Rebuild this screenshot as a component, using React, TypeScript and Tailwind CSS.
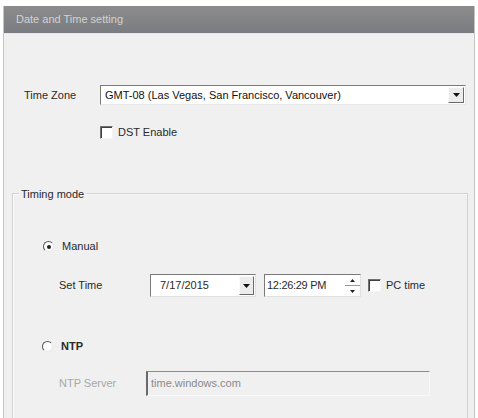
const font = { fontFamily: '"Liberation Sans", Arial, sans-serif' };

const Check = () => (
  <span className="block w-[13px] h-[13px] bg-white border border-t-[#707070] border-l-[#707070] border-b-[#f4f4f4] border-r-[#f4f4f4] shadow-[inset_1px_1px_0_#404040]" />
);

const Radio = ({ on }: { on?: boolean }) => (
  <span className="flex items-center justify-center w-[11px] h-[11px] rounded-full bg-white border border-t-[#555] border-l-[#555] border-b-[#e8e8e8] border-r-[#e8e8e8]">
    {on && <span className="block w-[4px] h-[4px] rounded-full bg-[#222]" />}
  </span>
);

const Arrow = () => (
  <svg width="7" height="4" viewBox="0 0 7 4">
    <path d="M0 0h7L3.5 4z" fill="#111" />
  </svg>
);

export default function App() {
  return (
    <div className="w-[478px] h-[418px] bg-white pt-[6px] overflow-hidden text-[11px] text-[#2a2a2a]" style={font}>
      <div className="mx-[3px] h-full border-l border-r border-[#c4c4c4] bg-[#f0f0f0]">
        <div className="h-[28px] flex items-center pl-[12px] bg-gradient-to-b from-[#8c8c8c] to-[#7a7c81] text-[#d2d2d2] border-b border-[#e8e8e8]">
          Date and Time setting
        </div>

        <div className="flex items-center mt-[51px] h-[20px]">
          <span className="w-[96px] pl-[20px]">Time Zone</span>
          <div className="w-[366px] h-[20px] flex items-center bg-white border border-t-[#7a7a7a] border-l-[#7a7a7a] border-b-[#e6e6e6] border-r-[#e6e6e6]">
            <span className="flex-1 pl-[4px] text-[#111]">GMT-08 (Las Vegas, San Francisco, Vancouver)</span>
            <span className="w-[16px] h-[16px] mr-[1px] flex items-center justify-center bg-[#ececec] border border-t-[#fafafa] border-l-[#fafafa] border-b-[#6a6a6a] border-r-[#6a6a6a]">
              <Arrow />
            </span>
          </div>
        </div>

        <div className="flex items-center gap-[5px] mt-[21px] ml-[96px] h-[13px]">
          <Check />
          <span>DST Enable</span>
        </div>

        <div className="relative mt-[54px] ml-[8px] mr-[6px] h-[240px] border border-[#d2d2d2] shadow-[inset_1px_1px_0_#fafafa] pt-[47px]">
          <span className="absolute left-[6px] -top-[8px] px-[2px] bg-[#f0f0f0]">Timing mode</span>

          <div className="flex items-center gap-[8px] ml-[30px] h-[11px]">
            <Radio on />
            <span>Manual</span>
          </div>

          <div className="flex items-center mt-[22px] ml-[46px] h-[23px]">
            <span className="w-[91px]">Set Time</span>
            <div className="w-[106px] h-[23px] flex items-center bg-white border border-t-[#7a7a7a] border-l-[#7a7a7a] border-b-[#e0e0e0] border-r-[#e0e0e0]">
              <span className="flex-1 pl-[9px]">7/17/2015</span>
              <span className="w-[15px] h-[19px] mr-[1px] flex items-center justify-center bg-[#ececec] border border-t-[#fafafa] border-l-[#fafafa] border-b-[#6a6a6a] border-r-[#6a6a6a]">
                <Arrow />
              </span>
            </div>
            <div className="ml-[8px] w-[97px] h-[23px] flex items-center bg-white border border-t-[#7a7a7a] border-l-[#7a7a7a] border-b-[#e0e0e0] border-r-[#e0e0e0]">
              <span className="flex-1 pl-[2px] tracking-[-0.3px]">12:26:29 PM</span>
              <span className="w-[15px] h-[21px] flex flex-col">
                <span className="flex-1 flex items-center justify-center border-b border-[#999]">
                  <svg width="5" height="3" viewBox="0 0 5 3"><path d="M0 3h5L2.5 0z" fill="#222" /></svg>
                </span>
                <span className="flex-1 flex items-center justify-center">
                  <svg width="5" height="3" viewBox="0 0 5 3"><path d="M0 0h5L2.5 3z" fill="#222" /></svg>
                </span>
              </span>
            </div>
            <span className="ml-[7px]"><Check /></span>
            <span className="ml-[5px]">PC time</span>
          </div>

          <div className="flex items-center gap-[8px] mt-[44px] ml-[29px] h-[11px]">
            <Radio />
            <span className="font-semibold">NTP</span>
          </div>

          <div className="flex items-center mt-[19px] ml-[46px] h-[25px]">
            <span className="w-[87px] text-[#a8a8a8]">NTP Server</span>
            <div className="w-[284px] h-[25px] flex items-center bg-[#f0f0f0] border border-t-[#8a8a8a] border-l-[#6a6a6a] border-b-[#f8f8f8] border-r-[#f8f8f8] border-l-2">
              <span className="pl-[3px] text-[#8a8a8a]">time.windows.com</span>
            </div>
          </div>
        </div>
      </div>
    </div>
  );
}
